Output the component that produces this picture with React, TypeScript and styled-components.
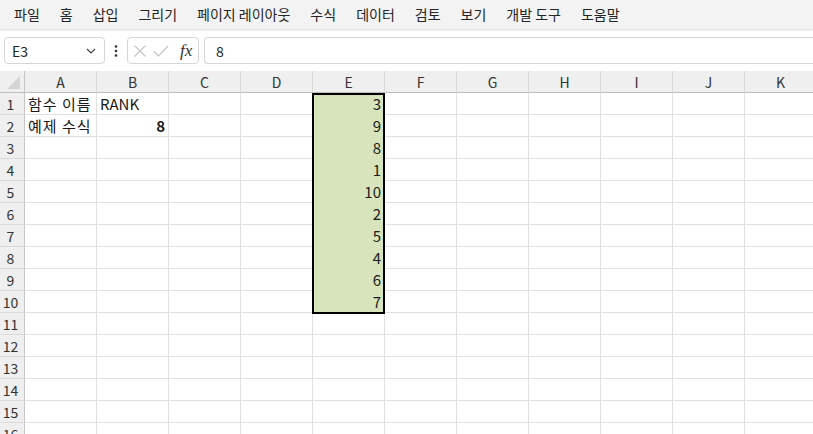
import React from 'react';
import styled, { createGlobalStyle } from 'styled-components';

const GlobalStyle = createGlobalStyle`
  html, body {
    margin: 0;
    padding: 0;
    background: #ffffff;
    overflow: hidden;
  }
  * {
    box-sizing: border-box;
  }
  body {
    font-family: "Noto Sans CJK KR", "Noto Sans", sans-serif;
    color: #1f1f1f;
  }
`;

const Window = styled.div`
  width: 813px;
  height: 434px;
  display: flex;
  flex-direction: column;
  overflow: hidden;
  background: #ffffff;
`;

const MenuBar = styled.div`
  height: 29px;
  flex: none;
  display: flex;
  align-items: center;
  gap: 20px;
  padding-left: 14px;
  background: #f3f3f3;
  box-shadow: 0 1px 2px rgba(0, 0, 0, 0.16);
  position: relative;
  z-index: 2;
`;

const MenuItem = styled.span`
  font-size: 14px;
  line-height: 29px;
  color: #242424;
  white-space: nowrap;
`;

const FormulaBar = styled.div`
  height: 42px;
  flex: none;
  display: flex;
  align-items: center;
  padding: 1px 0 0 4px;
  background: #ffffff;
`;

const Box = styled.div<{ $width?: number }>`
  height: 27px;
  ${(p) => (p.$width ? `width: ${p.$width}px; flex: none;` : 'flex: 1;')}
  display: flex;
  align-items: center;
  border: 1px solid #d6d6d6;
  border-radius: 4px;
  background: #ffffff;
`;

const FormulaInput = styled(Box)`
  border-right: none;
  border-radius: 4px 0 0 4px;
  padding-left: 11px;
  font-size: 14px;
`;

const NameText = styled.span`
  flex: 1;
  padding-left: 7px;
  font-size: 14px;
  color: #242424;
`;

const Dots = styled.div`
  width: 22px;
  flex: none;
  display: flex;
  justify-content: center;
`;

const Spacer = styled.div`
  width: 5px;
  flex: none;
`;

const FxIcons = styled.div`
  display: flex;
  align-items: center;
  gap: 6px;
  padding-left: 5px;
`;

const Fx = styled.span`
  font-family: "Liberation Serif", "DejaVu Serif", serif;
  font-style: italic;
  font-size: 17px;
  color: #333333;
  margin-left: 5px;
`;

const Sheet = styled.div`
  position: relative;
  flex: 1;
  display: grid;
  grid-template-columns: 25px repeat(11, 72px);
  grid-auto-rows: 22px;
  align-content: start;
`;

const Corner = styled.div`
  background: #efefef;
  border-right: 1px solid #c6c6c6;
  border-bottom: 1px solid #bdbdbd;
  position: relative;
  &::after {
    content: '';
    position: absolute;
    right: 4px;
    bottom: 3px;
    border-style: solid;
    border-width: 0 0 13px 13px;
    border-color: transparent transparent #d4d4d4 transparent;
  }
`;

const ColHead = styled.div`
  background: #efefef;
  border-right: 1px solid #dadada;
  border-bottom: 1px solid #bdbdbd;
  display: flex;
  align-items: center;
  justify-content: center;
  font-size: 14px;
  color: #333333;
`;

const RowHead = styled.div`
  background: #efefef;
  border-right: 1px solid #c6c6c6;
  border-bottom: 1px solid #dadada;
  display: flex;
  align-items: center;
  justify-content: center;
  padding-right: 3px;
  font-size: 14px;
  color: #333333;
`;

const Cell = styled.div<{ $num?: boolean; $bold?: boolean; $fill?: boolean; $ko?: boolean }>`
  border-right: 1px solid ${(p) => (p.$fill ? '#d8e4bc' : '#e1e1e1')};
  border-bottom: 1px solid ${(p) => (p.$fill ? '#d8e4bc' : '#e1e1e1')};
  background: ${(p) => (p.$fill ? '#d8e4bc' : '#ffffff')};
  display: flex;
  align-items: center;
  justify-content: ${(p) => (p.$num ? 'flex-end' : 'flex-start')};
  padding: 0 3px;
  font-size: 15px;
  letter-spacing: ${(p) => (p.$ko ? '1px' : '0')};
  font-weight: ${(p) => (p.$bold ? 700 : 400)};
  color: #1a1a1a;
  white-space: nowrap;
`;

const Selection = styled.div`
  position: absolute;
  left: 312px;
  top: 22px;
  width: 73px;
  height: 221px;
  border: 2px solid #000000;
  pointer-events: none;
`;

const menus = ['파일', '홈', '삽입', '그리기', '페이지 레이아웃', '수식', '데이터', '검토', '보기', '개발 도구', '도움말'];
const cols = ['A', 'B', 'C', 'D', 'E', 'F', 'G', 'H', 'I', 'J', 'K'];
const eValues = [3, 9, 8, 1, 10, 2, 5, 4, 6, 7];

type CellData = { text: string; num?: boolean; bold?: boolean; ko?: boolean };

function cellAt(row: number, col: number): CellData | null {
  if (row === 1 && col === 0) return { text: '함수 이름', ko: true };
  if (row === 1 && col === 1) return { text: 'RANK' };
  if (row === 2 && col === 0) return { text: '예제 수식', ko: true };
  if (row === 2 && col === 1) return { text: '8', num: true, bold: true };
  if (col === 4 && row <= 10) return { text: String(eValues[row - 1]), num: true };
  return null;
}

export default function App() {
  const rows = Array.from({ length: 16 }, (_, i) => i + 1);
  return (
    <Window>
      <GlobalStyle />
      <MenuBar>
        {menus.map((m) => (
          <MenuItem key={m}>{m}</MenuItem>
        ))}
      </MenuBar>
      <FormulaBar>
        <Box $width={101}>
          <NameText>E3</NameText>
          <svg width="22" height="14" viewBox="0 0 22 14">
            <path d="M5 5 L9 9 L13 5" fill="none" stroke="#444" strokeWidth="1.2" />
          </svg>
        </Box>
        <Dots>
          <svg width="4" height="14" viewBox="0 0 4 14">
            <circle cx="2" cy="2.5" r="1.3" fill="#333" />
            <circle cx="2" cy="7" r="1.3" fill="#333" />
            <circle cx="2" cy="11.5" r="1.3" fill="#333" />
          </svg>
        </Dots>
        <Box $width={72}>
          <FxIcons>
            <svg width="14" height="14" viewBox="0 0 14 14">
              <path d="M1.5 1.5 L12.5 12.5 M12.5 1.5 L1.5 12.5" stroke="#c4c4c4" strokeWidth="1.2" fill="none" />
            </svg>
            <svg width="16" height="14" viewBox="0 0 16 14">
              <path d="M1 7.5 L5.5 12 L15 2" stroke="#c4c4c4" strokeWidth="1.2" fill="none" />
            </svg>
            <Fx>fx</Fx>
          </FxIcons>
        </Box>
        <Spacer />
        <FormulaInput>8</FormulaInput>
      </FormulaBar>
      <Sheet>
        <Corner />
        {cols.map((c) => (
          <ColHead key={c}>{c}</ColHead>
        ))}
        {rows.map((r) => (
          <React.Fragment key={r}>
            <RowHead>{r}</RowHead>
            {cols.map((c, ci) => {
              const d = cellAt(r, ci);
              return (
                <Cell key={c} $num={d?.num} $bold={d?.bold} $ko={d?.ko} $fill={ci === 4 && r <= 10}>
                  {d?.text}
                </Cell>
              );
            })}
          </React.Fragment>
        ))}
        <Selection />
      </Sheet>
    </Window>
  );
}
